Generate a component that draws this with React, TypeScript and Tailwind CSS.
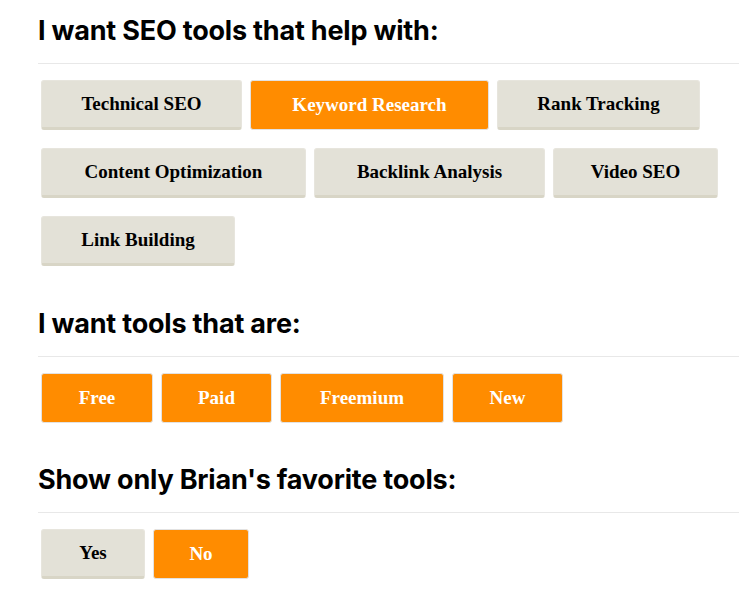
const sections = [
  {
    title: "I want SEO tools that help with:",
    pad: "pt-[14px]",
    rows: [
      [
        { label: "Technical SEO", w: "w-[201px]", on: false },
        { label: "Keyword Research", w: "w-[239px]", on: true },
        { label: "Rank Tracking", w: "w-[203px]", on: false },
      ],
      [
        { label: "Content Optimization", w: "w-[265px]", on: false },
        { label: "Backlink Analysis", w: "w-[231px]", on: false },
        { label: "Video SEO", w: "w-[165px]", on: false },
      ],
      [{ label: "Link Building", w: "w-[194px]", on: false }],
    ],
  },
  {
    title: "I want tools that are:",
    pad: "pt-[41px]",
    rows: [
      [
        { label: "Free", w: "w-[112px]", on: true },
        { label: "Paid", w: "w-[111px]", on: true },
        { label: "Freemium", w: "w-[164px]", on: true },
        { label: "New", w: "w-[111px]", on: true },
      ],
    ],
  },
  {
    title: "Show only Brian's favorite tools:",
    pad: "pt-[40px]",
    rows: [
      [
        { label: "Yes", w: "w-[104px]", on: false },
        { label: "No", w: "w-[96px]", on: true },
      ],
    ],
  },
];

function Chip({ label, w, on }: { label: string; w: string; on: boolean }) {
  return (
    <button
      className={
        "h-[50px] shrink-0 rounded-[3px] text-[19px] font-bold " +
        w +
        (on
          ? " border border-[#e2e2e2] bg-[#ff8c00] text-white"
          : " border border-b-[3px] border-[#e7e5dd] border-b-[#d8d5c6] bg-[#e3e1d7] text-black")
      }
      style={{ fontFamily: '"Liberation Serif", Georgia, serif' }}
    >
      {label}
    </button>
  );
}

export default function App() {
  return (
    <div className="min-h-[594px] bg-white pl-[38px]" style={{ fontFamily: "Inter, sans-serif" }}>
      {sections.map((s) => (
        <section key={s.title} className={s.pad}>
          <h2 className="text-[27px] leading-[34px] font-bold tracking-[-0.2px] text-black">{s.title}</h2>
          <div className="mt-[15px] h-px bg-[#e8e8e8]" />
          <div className="mt-[16px] flex flex-col gap-[18px] pl-[3px]">
            {s.rows.map((r, j) => (
              <div key={j} className="flex gap-[8px]">
                {r.map((b) => (
                  <Chip key={b.label} {...b} />
                ))}
              </div>
            ))}
          </div>
        </section>
      ))}
    </div>
  );
}
